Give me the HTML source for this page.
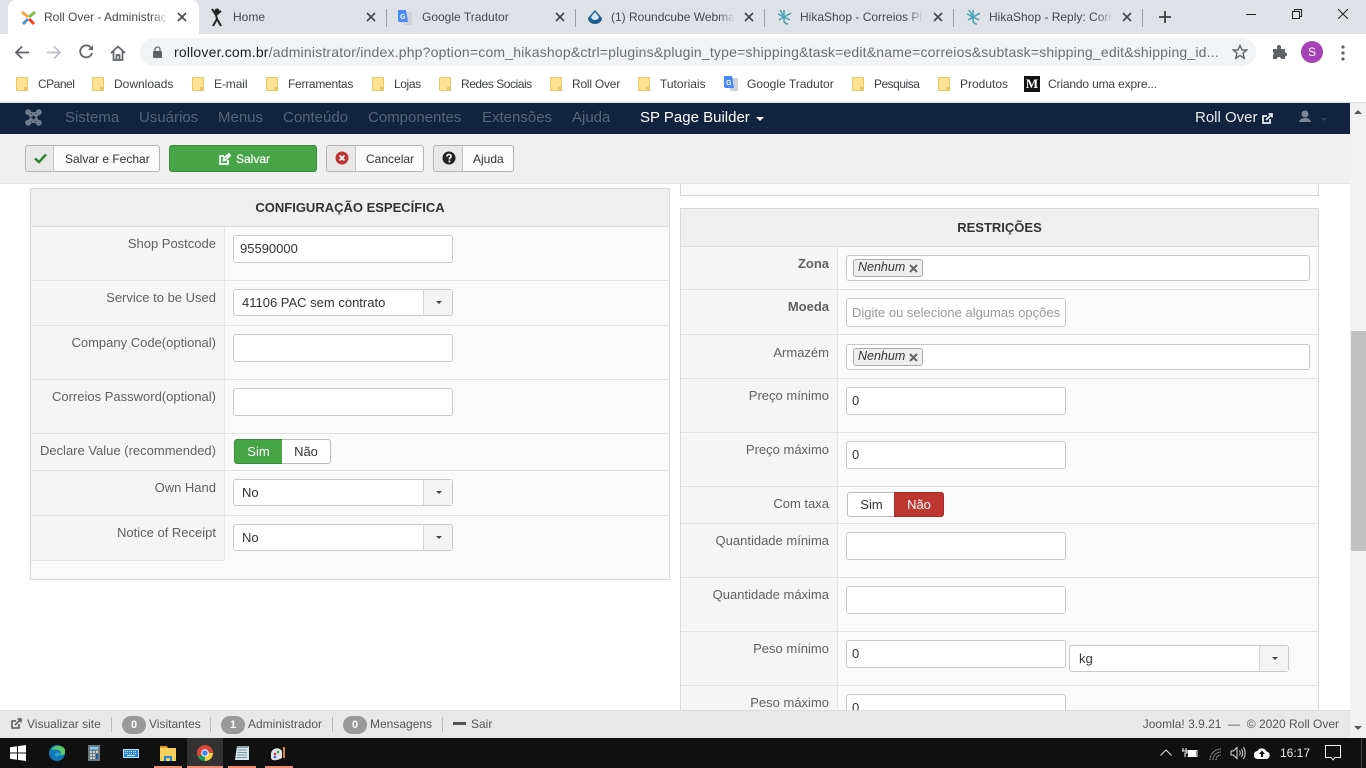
<!DOCTYPE html>
<html lang="pt-BR"><head><meta charset="utf-8"><title>Roll Over - Administração</title>
<style>
*{box-sizing:border-box}
html,body{margin:0;padding:0;width:1366px;height:768px;overflow:hidden;background:#fff;font-family:"Liberation Sans",Arial,sans-serif;color:#515151}
.a{position:absolute}
.t{position:absolute;white-space:nowrap}
svg{position:absolute;display:block}
.tab{font-size:12px;color:#45484c;top:10px;overflow:hidden;width:124px;height:16px;line-height:15px}
.tab:after{content:"";position:absolute;right:0;top:0;width:16px;height:16px;background:linear-gradient(90deg,rgba(222,225,230,0),#dee1e6)}
.tab.on:after{background:linear-gradient(90deg,rgba(255,255,255,0),#fff)}
.sep{position:absolute;top:9px;width:1px;height:18px;background:#9b9fa4}
.bm{position:absolute;top:77px;font-size:12px;line-height:14px;color:#3c4043;white-space:nowrap}
.fd{position:absolute;top:77px;width:12px;height:14px;background:#fde293;border:1px solid #e8c766;border-radius:1px}
.fd:after{content:"";position:absolute;right:-1px;bottom:-1px;width:4px;height:4px;background:#e8c766}
.nv{position:absolute;top:109px;font-size:15px;line-height:18px;color:#576579;white-space:nowrap}
.btn{position:absolute;top:145px;height:27px;border:1px solid #b4b4b4;border-radius:3px;background:#fafafa;font-size:12px;line-height:26px;color:#333;white-space:nowrap}
.btn i{position:absolute;left:0;top:0;height:25px;background:#e8e8e8;border-right:1px solid #c4c4c4;border-radius:2px 0 0 2px}
.btn span{position:absolute;top:0}
.panel{position:absolute;background:#fafafa;border:1px solid #d8d8d8}
.hd{position:absolute;left:0;right:0;top:0;height:38px;background:#efefef;border-bottom:1px solid #dcdcdc;text-align:center;font-size:13px;font-weight:bold;line-height:37px;color:#333}
.col{position:absolute;left:0;top:38px;background:#f5f5f5;border-right:1px solid #e6e6e6}
.ln{position:absolute;left:0;right:0;height:1px;background:#e2e2e2}
.lb{position:absolute;font-size:13px;line-height:16px;color:#606060;text-align:right;white-space:nowrap}
.ip{position:absolute;background:#fff;border:1px solid #c8c8c8;border-radius:3px;font-size:13px;color:#333;line-height:26px;padding-left:6px;white-space:nowrap}
.sel{position:absolute;background:#fff;border:1px solid #c8c8c8;border-radius:3px;font-size:13px;color:#333;line-height:26px;padding-left:8px;white-space:nowrap;width:220px;height:27px}
.sel:after{content:"";position:absolute;right:0;top:0;width:28px;height:25px;background:#f3f3f3;border-left:1px solid #d5d5d5}
.sel:before{content:"";position:absolute;z-index:2;right:10px;top:11px;border:3.5px solid transparent;border-top-color:#444;border-bottom:0}
.chip{position:absolute;left:6px;top:3px;width:70px;height:18px;background:#eee;border:1px solid #aaa;border-radius:3px;font-size:12.5px;font-style:italic;line-height:15px;padding-left:4px;color:#333}
.chip svg{left:55px;top:4px}
.tg{position:absolute;height:25px;font-size:13px;line-height:24px;text-align:center}
.ft{position:absolute;top:717px;font-size:12px;line-height:15px;color:#555;white-space:nowrap}
.bdg{position:absolute;top:716px;width:24px;height:18px;border-radius:9px;background:#999;color:#fff;font-size:11px;font-weight:bold;line-height:18px;text-align:center}
.fs{position:absolute;top:717px;width:1px;height:15px;background:#bbb}
.ul{position:absolute;top:766px;height:2px;background:#f08e74}
</style></head><body>

<!-- tab strip -->
<div class="a" style="left:0;top:0;width:1366px;height:34px;background:#dee1e6"></div>
<div class="a" style="left:8px;top:0;width:191px;height:34px;background:#fff;border-radius:8px 8px 0 0"></div>
<svg style="left:20px;top:9px" width="17" height="17" viewBox="0 0 17 17" fill="none" stroke-width="3"><path d="M2 3L8 8" stroke="#f9a541"/><path d="M15 3L9 8" stroke="#7ac143"/><path d="M3 15L8 10" stroke="#5091cd"/><path d="M14 15L9 10" stroke="#f44321"/></svg>
<div class="tab on t" style="left:44px">Roll Over - Administração</div>
<svg style="left:177px;top:12px" width="10" height="10" viewBox="0 0 10 10" stroke="#43474b" stroke-width="1.6"><path d="M1 1L9 9M9 1L1 9"/></svg>
<svg style="left:210px;top:8px" width="14" height="19" viewBox="0 0 14 19" fill="none" stroke="#222" stroke-width="2"><circle cx="7" cy="3" r="1.5" fill="#222"/><path d="M2 1L6 7L11 3M6 7L7 11L3 18M7 11L11 18"/></svg>
<div class="tab t" style="left:233px">Home</div>
<svg style="left:366px;top:12px" width="10" height="10" viewBox="0 0 10 10" stroke="#43474b" stroke-width="1.6"><path d="M1 1L9 9M9 1L1 9"/></svg>
<div class="sep" style="left:386px"></div>
<svg style="left:397px;top:9px" width="16" height="17" viewBox="0 0 16 17"><path d="M7 3H15V16H7Z" fill="#cfd3d8"/><path d="M1 1H9L11 13H3A2 2 0 0 1 1 11Z" fill="#4a8af4"/><text x="3" y="10" font-size="7" font-weight="bold" fill="#fff" font-family="Liberation Sans">G</text></svg>
<div class="tab t" style="left:422px">Google Tradutor</div>
<svg style="left:555px;top:12px" width="10" height="10" viewBox="0 0 10 10" stroke="#43474b" stroke-width="1.6"><path d="M1 1L9 9M9 1L1 9"/></svg>
<div class="sep" style="left:575px"></div>
<svg style="left:587px;top:9px" width="16" height="16" viewBox="0 0 16 16"><path d="M8 1L15 9A7 6 0 0 1 1 9Z" fill="#1f5f8f"/><path d="M8 3L12 8A4 3 0 0 1 4 8Z" fill="#d5e8f5"/></svg>
<div class="tab t" style="left:611px">(1) Roundcube Webmail</div>
<svg style="left:744px;top:12px" width="10" height="10" viewBox="0 0 10 10" stroke="#43474b" stroke-width="1.6"><path d="M1 1L9 9M9 1L1 9"/></svg>
<div class="sep" style="left:764px"></div>
<svg style="left:777px;top:9px" width="15" height="16" viewBox="0 0 15 16" fill="none" stroke="#3f9fae" stroke-width="1.4"><path d="M7 1V12Q8 15 11 15M1 5L13 11M14 4L2 11M3 1L6 6"/></svg>
<div class="tab t" style="left:800px">HikaShop - Correios Plugin</div>
<svg style="left:933px;top:12px" width="10" height="10" viewBox="0 0 10 10" stroke="#43474b" stroke-width="1.6"><path d="M1 1L9 9M9 1L1 9"/></svg>
<div class="sep" style="left:953px"></div>
<svg style="left:966px;top:9px" width="15" height="16" viewBox="0 0 15 16" fill="none" stroke="#3f9fae" stroke-width="1.4"><path d="M7 1V12Q8 15 11 15M1 5L13 11M14 4L2 11M3 1L6 6"/></svg>
<div class="tab t" style="left:989px">HikaShop - Reply: Correios</div>
<svg style="left:1122px;top:12px" width="10" height="10" viewBox="0 0 10 10" stroke="#43474b" stroke-width="1.6"><path d="M1 1L9 9M9 1L1 9"/></svg>
<div class="sep" style="left:1142px"></div>
<svg style="left:1159px;top:11px" width="12" height="12" viewBox="0 0 12 12" stroke="#3c4043" stroke-width="1.8"><path d="M6 0V12M0 6H12"/></svg>
<svg style="left:1246px;top:14px" width="10" height="2"><rect width="10" height="1" fill="#222"/></svg>
<svg style="left:1292px;top:9px" width="10" height="10" viewBox="0 0 10 10" fill="none" stroke="#222"><path d="M.5 2.5H7.5V9.5H.5ZM2.5 2.5V.5H9.5V7.5H7.5"/></svg>
<svg style="left:1338px;top:9px" width="10" height="10" viewBox="0 0 10 10" stroke="#222"><path d="M0 0L10 10M10 0L0 10"/></svg>

<!-- toolbar -->
<svg style="left:14px;top:45px" width="16" height="15" viewBox="0 0 16 15" fill="none" stroke="#5f6368" stroke-width="1.8"><path d="M15 7.5H2M8 1.5L2 7.5L8 13.5"/></svg>
<svg style="left:46px;top:45px" width="16" height="15" viewBox="0 0 16 15" fill="none" stroke="#bdc1c6" stroke-width="1.8"><path d="M1 7.5H14M8 1.5L14 7.5L8 13.5"/></svg>
<svg style="left:79px;top:44px" width="15" height="15" viewBox="0 0 15 15" fill="none" stroke="#5f6368" stroke-width="1.8"><path d="M13 9A6 6 0 1 1 11.5 3.2"/><path d="M14 1V6H9Z" fill="#5f6368" stroke="none"/></svg>
<svg style="left:110px;top:45px" width="16" height="16" viewBox="0 0 16 16" fill="none" stroke="#5f6368" stroke-width="1.7"><path d="M1 8L8 1.5L15 8M3.5 6.5V15H12.5V6.5M6.5 15V10H9.5V15"/></svg>
<div class="a" style="left:140px;top:38px;width:1116px;height:28px;border-radius:14px;background:#f1f3f4"></div>
<svg style="left:153px;top:46px" width="9" height="12" viewBox="0 0 9 12"><path d="M2 5V3.500A2.500 2.500 0 0 1 7 3.500V5" fill="none" stroke="#5f6368" stroke-width="1.3"/><rect y="5" width="9" height="7" rx="1" fill="#5f6368"/></svg>
<div class="t" style="left:174px;top:44px;font-size:14px;line-height:17px;color:#6a6e73;letter-spacing:.19px"><span style="color:#202124">rollover.com.br</span>/administrator/index.php?option=com_hikashop&amp;ctrl=plugins&amp;plugin_type=shipping&amp;task=edit&amp;name=correios&amp;subtask=shipping_edit&amp;shipping_id...</div>
<svg style="left:1232px;top:44px" width="16" height="16" viewBox="0 0 16 16" fill="none" stroke="#5f6368" stroke-width="1.4"><path d="M8 1.500L10 6H14.800L11 9.200L12.300 14.300L8 11.500L3.700 14.300L5 9.200L1.200 6H6Z"/></svg>
<svg style="left:1272px;top:44px" width="16" height="16" viewBox="0 0 16 16" fill="#5f6368"><path d="M1 5H5V3A2 2 0 0 1 9 3V5H13V8.500A2 2 0 0 1 13 12.500V15H9A2 2 0 0 0 5 15H1V11A2 2 0 0 0 1 8Z"/></svg>
<div class="a" style="left:1301px;top:41px;width:22px;height:22px;border-radius:50%;background:#a742b8;color:#fff;font-size:12px;line-height:22px;text-align:center">S</div>
<svg style="left:1341px;top:45px" width="4" height="16" viewBox="0 0 4 16" fill="#5f6368"><circle cx="2" cy="2" r="1.600"/><circle cx="2" cy="8" r="1.600"/><circle cx="2" cy="14" r="1.600"/></svg>

<!-- bookmarks -->
<i class="fd" style="left:16px"></i><div class="bm" style="left:38px;letter-spacing:-.5px">CPanel</div>
<i class="fd" style="left:92px"></i><div class="bm" style="left:114px">Downloads</div>
<i class="fd" style="left:192px"></i><div class="bm" style="left:214px;letter-spacing:-.1px">E-mail</div>
<i class="fd" style="left:266px"></i><div class="bm" style="left:288px;letter-spacing:-.27px">Ferramentas</div>
<i class="fd" style="left:372px"></i><div class="bm" style="left:394px;letter-spacing:-.4px">Lojas</div>
<i class="fd" style="left:439px"></i><div class="bm" style="left:461px;letter-spacing:-.46px">Redes Sociais</div>
<i class="fd" style="left:550px"></i><div class="bm" style="left:572px;letter-spacing:-.22px">Roll Over</div>
<i class="fd" style="left:638px"></i><div class="bm" style="left:660px">Tutoriais</div>
<svg style="left:723px;top:75px" width="16" height="17" viewBox="0 0 16 17"><path d="M7 3H15V16H7Z" fill="#cfd3d8"/><path d="M1 1H9L11 13H3A2 2 0 0 1 1 11Z" fill="#4a8af4"/><text x="3" y="10" font-size="7" font-weight="bold" fill="#fff" font-family="Liberation Sans">G</text></svg>
<div class="bm" style="left:747px">Google Tradutor</div>
<i class="fd" style="left:852px"></i><div class="bm" style="left:874px;letter-spacing:-.5px">Pesquisa</div>
<i class="fd" style="left:938px"></i><div class="bm" style="left:960px">Produtos</div>
<div class="a" style="left:1024px;top:76px;width:16px;height:16px;background:#111;color:#fff;font:bold 13px/16px 'Liberation Serif',serif;text-align:center">M</div>
<div class="bm" style="left:1048px;letter-spacing:-.16px">Criando uma expre...</div>
<div class="a" style="left:0;top:102px;width:1366px;height:1px;background:#dadce0"></div>

<!-- page -->
<div class="a" style="left:0;top:184px;width:1350px;height:526px;background:#fff"></div>
<div class="a" style="left:0;top:103px;width:1350px;height:31px;background:#12233f"></div>
<svg style="left:25px;top:109px" width="17" height="17" viewBox="0 0 17 17" fill="#6f7c8e"><circle cx="3.200" cy="3.200" r="3"/><circle cx="13.800" cy="3.200" r="3"/><circle cx="3.200" cy="13.800" r="3"/><circle cx="13.800" cy="13.800" r="3"/><path d="M3 5H14L12 8.500L14 12H3L5 8.500Z"/><path d="M5 3H12L8.500 6Z"/><path d="M5 14H12L8.500 11Z"/><path d="M8.500 6.500L11 8.500L8.500 10.500L6 8.500Z" fill="#12233f"/></svg>
<div class="nv" style="left:65px">Sistema</div>
<div class="nv" style="left:139px">Usuários</div>
<div class="nv" style="left:218px">Menus</div>
<div class="nv" style="left:283px">Conteúdo</div>
<div class="nv" style="left:368px">Componentes</div>
<div class="nv" style="left:482px">Extensões</div>
<div class="nv" style="left:572px">Ajuda</div>
<div class="nv" style="left:640px;color:#fff">SP Page Builder</div>
<div class="a" style="left:756px;top:117px;border:4px solid transparent;border-top-color:#fff;border-bottom:0"></div>
<div class="nv" style="left:1195px;color:#e8ebee">Roll Over</div>
<svg style="left:1262px;top:113px" width="11" height="11" viewBox="0 0 11 11" fill="none" stroke="#e8ebee" stroke-width="1.800"><path d="M8 6V10H1V3H5M4 7L10 1M6.500 1H10V4.500"/></svg>
<svg style="left:1299px;top:110px" width="12" height="13" viewBox="0 0 12 13" fill="#7b8796"><circle cx="6" cy="4" r="3.500"/><path d="M0 12Q1 8 6 8T12 12Z"/></svg>
<div class="a" style="left:1321px;top:118px;border:3.500px solid transparent;border-top-color:#33435c;border-bottom:0"></div>

<div class="a" style="left:0;top:134px;width:1350px;height:50px;background:#f0f0f0;border-bottom:1px solid #e4e4e4"></div>
<div class="btn" style="left:25px;width:135px"><i style="width:28px"></i><svg style="left:8px;top:7px" width="13" height="11" viewBox="0 0 13 11" fill="none" stroke="#378137" stroke-width="2.500"><path d="M1 5.500L5 9L12 1.500"/></svg><span style="left:39px">Salvar e Fechar</span></div>
<div class="btn" style="left:169px;width:148px;background:#46a546;border-color:#3d8b3d;color:#fff"><svg style="left:49px;top:7px" width="12" height="12" viewBox="0 0 12 12" fill="none" stroke="#fff" stroke-width="1.800"><path d="M9 7V11H1V3H5M4.500 7.500L4.800 5L10 1L11 2.500L6.500 7.200Z"/></svg><span style="left:66px;text-shadow:0 0 .6px #fff">Salvar</span></div>
<div class="btn" style="left:326px;width:98px"><i style="width:29px"></i><svg style="left:8px;top:5px" width="14" height="14" viewBox="0 0 14 14"><circle cx="7" cy="7" r="6.500" fill="#bd362f"/><path d="M4.500 4.500L9.500 9.500M9.500 4.500L4.500 9.500" stroke="#fff" stroke-width="1.800"/></svg><span style="left:39px">Cancelar</span></div>
<div class="btn" style="left:433px;width:81px"><i style="width:29px"></i><svg style="left:8px;top:5px" width="14" height="14" viewBox="0 0 14 14"><circle cx="7" cy="7" r="6.500" fill="#222"/><path d="M5 5.500Q5 3.500 7 3.500T9 5.500Q9 6.500 7.500 7.200V8.500" stroke="#fff" stroke-width="1.600" fill="none"/><rect x="6.500" y="9.500" width="1.800" height="1.800" fill="#fff"/></svg><span style="left:39px">Ajuda</span></div>

<!-- left panel -->
<div class="panel" style="left:30px;top:188px;width:640px;height:392px">
  <div class="col" style="width:194px;height:333px"></div>
  <div class="hd">CONFIGURAÇÃO ESPECÍFICA</div>
  <div class="ln" style="top:91px"></div><div class="ln" style="top:136px"></div><div class="ln" style="top:190px"></div><div class="ln" style="top:244px"></div><div class="ln" style="top:281px"></div><div class="ln" style="top:326px"></div>
  <div class="ln" style="top:371px;right:445px"></div>
</div>
<div class="lb" style="right:1150px;top:236px">Shop Postcode</div>
<div class="lb" style="right:1150px;top:290px">Service to be Used</div>
<div class="lb" style="right:1150px;top:335px">Company Code(optional)</div>
<div class="lb" style="right:1150px;top:389px">Correios Password(optional)</div>
<div class="lb" style="right:1150px;top:443px">Declare Value (recommended)</div>
<div class="lb" style="right:1150px;top:480px">Own Hand</div>
<div class="lb" style="right:1150px;top:525px">Notice of Receipt</div>
<div class="ip" style="left:233px;top:235px;width:220px;height:28px">95590000</div>
<div class="sel" style="left:233px;top:289px">41106 PAC sem contrato</div>
<div class="ip" style="left:233px;top:334px;width:220px;height:28px"></div>
<div class="ip" style="left:233px;top:388px;width:220px;height:28px"></div>
<div class="tg" style="left:234px;top:439px;width:49px;background:#46a546;border:1px solid #3d8b3d;border-radius:3px 0 0 3px;color:#fff">Sim</div>
<div class="tg" style="left:282px;top:439px;width:49px;background:#fff;border:1px solid #bbb;border-left:0;border-radius:0 3px 3px 0;color:#333">Não</div>
<div class="sel" style="left:233px;top:479px">No</div>
<div class="sel" style="left:233px;top:524px">No</div>

<!-- right panel -->
<div class="panel" style="left:680px;top:184px;width:639px;height:12px;border-top:0"></div>
<div class="panel" style="left:680px;top:208px;width:639px;height:520px">
  <div class="col" style="width:157px;height:482px"></div>
  <div class="hd">RESTRIÇÕES</div>
  <div class="ln" style="top:80px"></div><div class="ln" style="top:125px"></div><div class="ln" style="top:169px"></div><div class="ln" style="top:223px"></div><div class="ln" style="top:277px"></div><div class="ln" style="top:314px"></div><div class="ln" style="top:368px"></div><div class="ln" style="top:422px"></div><div class="ln" style="top:476px"></div>
</div>
<div class="lb" style="right:537px;top:256px;font-weight:bold">Zona</div>
<div class="lb" style="right:537px;top:299px;font-weight:bold">Moeda</div>
<div class="lb" style="right:537px;top:345px">Armazém</div>
<div class="lb" style="right:537px;top:388px">Preço mínimo</div>
<div class="lb" style="right:537px;top:442px">Preço máximo</div>
<div class="lb" style="right:537px;top:496px">Com taxa</div>
<div class="lb" style="right:537px;top:533px">Quantidade mínima</div>
<div class="lb" style="right:537px;top:587px">Quantidade máxima</div>
<div class="lb" style="right:537px;top:641px">Peso mínimo</div>
<div class="lb" style="right:537px;top:695px">Peso máximo</div>
<div class="ip" style="left:846px;top:255px;width:464px;height:26px"><div class="chip">Nenhum<svg width="9" height="9" viewBox="0 0 9 9" stroke="#666" stroke-width="2"><path d="M1 1L8 8M8 1L1 8"/></svg></div></div>
<div class="ip" style="left:846px;top:298px;width:220px;height:29px;padding-left:5px;color:#999;line-height:28px">Digite ou selecione algumas opções</div>
<div class="ip" style="left:846px;top:344px;width:464px;height:26px"><div class="chip">Nenhum<svg width="9" height="9" viewBox="0 0 9 9" stroke="#666" stroke-width="2"><path d="M1 1L8 8M8 1L1 8"/></svg></div></div>
<div class="ip" style="left:846px;top:387px;width:220px;height:28px;padding-left:5px">0</div>
<div class="ip" style="left:846px;top:441px;width:220px;height:28px;padding-left:5px">0</div>
<div class="tg" style="left:847px;top:492px;width:48px;background:#fff;border:1px solid #bbb;border-right:0;border-radius:3px 0 0 3px;color:#333">Sim</div>
<div class="tg" style="left:894px;top:492px;width:50px;background:#bd362f;border:1px solid #a52e28;border-radius:0 3px 3px 0;color:#fff">Não</div>
<div class="ip" style="left:846px;top:532px;width:220px;height:28px"></div>
<div class="ip" style="left:846px;top:586px;width:220px;height:28px"></div>
<div class="ip" style="left:846px;top:640px;width:220px;height:28px;padding-left:5px">0</div>
<div class="sel" style="left:1069px;top:645px;padding-left:9px">kg</div>
<div class="ip" style="left:846px;top:694px;width:220px;height:28px;padding-left:5px">0</div>

<!-- footer -->
<div class="a" style="left:0;top:710px;width:1350px;height:28px;background:#e8e8e8;border-top:1px solid #dcdcdc"></div>
<svg style="left:11px;top:718px" width="11" height="11" viewBox="0 0 11 11" fill="none" stroke="#555" stroke-width="1.500"><path d="M8 6V10H1V3H5M4 7L10 1M6.500 1H10V4.500"/></svg>
<div class="ft" style="left:27px">Visualizar site</div>
<div class="fs" style="left:111px"></div>
<div class="bdg" style="left:122px">0</div><div class="ft" style="left:149px">Visitantes</div>
<div class="fs" style="left:210px"></div>
<div class="bdg" style="left:221px">1</div><div class="ft" style="left:248px">Administrador</div>
<div class="fs" style="left:332px"></div>
<div class="bdg" style="left:343px">0</div><div class="ft" style="left:370px">Mensagens</div>
<div class="fs" style="left:442px"></div>
<div class="a" style="left:453px;top:722px;width:13px;height:3px;background:#555"></div>
<div class="ft" style="left:471px">Sair</div>
<div class="ft" style="right:27px">Joomla! 3.9.21 &nbsp;— &nbsp;© 2020 Roll Over</div>

<!-- scrollbar -->
<div class="a" style="left:1350px;top:103px;width:16px;height:635px;background:#f1f1f1"></div>
<div class="a" style="left:1351px;top:331px;width:15px;height:220px;background:#c1c1c1"></div>
<div class="a" style="left:1354px;top:110px;border:4px solid transparent;border-bottom-color:#555;border-top:0"></div>
<div class="a" style="left:1354px;top:726px;border:4px solid transparent;border-top-color:#555;border-bottom:0"></div>

<!-- taskbar -->
<div class="a" style="left:0;top:738px;width:1366px;height:30px;background:#101010"></div>
<svg style="left:10px;top:745px" width="16" height="16" viewBox="0 0 16 16" fill="#fff"><path d="M0 2.300L7 1.300V7.500H0ZM8 1.100L16 0V7.500H8ZM0 8.500H7V14.700L0 13.700ZM8 8.500H16V16L8 14.900Z"/></svg>
<svg style="left:49px;top:745px" width="16" height="16" viewBox="0 0 16 16"><circle cx="8" cy="8" r="8" fill="#0f78b8"/><path d="M2 5Q5 0 11 1T16 8Q15 11 11 10Q13 6 9 5Q5 4 2 5Z" fill="#5bc96b"/><path d="M6 9Q8 6 11 8Q11 11 8 12Q6 11 6 9Z" fill="#2a9fd8"/></svg>
<svg style="left:88px;top:745px" width="12" height="16" viewBox="0 0 12 16"><rect width="12" height="16" fill="#6d7b85"/><rect x="2" y="2" width="8" height="2.500" fill="#7ed1f0"/><path d="M2 6H4V8H2ZM5 6H7V8H5ZM8 6H10V8H8ZM2 9H4V11H2ZM5 9H7V11H5ZM2 12H4V14H2ZM5 12H7V14H5Z" fill="#d0d5d8"/><rect x="8" y="9" width="2" height="5" fill="#1d5c9e"/></svg>
<svg style="left:123px;top:749px" width="16" height="9" viewBox="0 0 16 9"><rect width="16" height="9" fill="#bfe0f7"/><rect x="1" y="1" width="14" height="7" fill="#2a86d9"/><path d="M2 2.500H14M2 4.500H14" stroke="#cfe8fb" stroke-dasharray="1 1"/><rect x="4" y="6" width="8" height="1" fill="#cfe8fb"/></svg>
<svg style="left:160px;top:745px" width="16" height="16" viewBox="0 0 16 16"><path d="M0 1H7L8 3H0Z" fill="#d99a1e"/><rect y="3" width="16" height="13" fill="#f8cf5c"/><path d="M4 16V11H12V16H10V13H6V16Z" fill="#2a86d9"/></svg>
<div class="a" style="left:187px;top:738px;width:36px;height:30px;background:#333"></div>
<svg style="left:197px;top:745px" width="16" height="16" viewBox="0 0 16 16"><circle cx="8" cy="8" r="8" fill="#db4437"/><path d="M8 8L1 12A8 8 0 0 0 8 16L12 9Z" fill="#0f9d58"/><path d="M8 8H16A8 8 0 0 1 8 16Z" fill="#ffcd40"/><circle cx="8" cy="8" r="3.800" fill="#fff"/><circle cx="8" cy="8" r="2.800" fill="#4285f4"/></svg>
<svg style="left:234px;top:745px" width="16" height="16" viewBox="0 0 16 16"><path d="M3 1H15V15H1Z" fill="#d7e6ec"/><path d="M3 1H15L14 3H3Z" fill="#8da3ad"/><path d="M4 5H13M3.500 7.500H13M3 10H13M2.500 12.500H13" stroke="#7c95a1"/></svg>
<svg style="left:271px;top:745px" width="16" height="16" viewBox="0 0 16 16"><path d="M0 10A6 6 0 0 1 11 6V13Q5 16 2 15T0 10Z" fill="#dfe5ea"/><circle cx="4" cy="9" r="1.300" fill="#d33"/><circle cx="7" cy="7" r="1.300" fill="#3a3"/><circle cx="4" cy="12" r="1.300" fill="#36c"/><path d="M13 2V13" stroke="#e0812c" stroke-width="2"/></svg>
<div class="ul" style="left:154px;width:28px"></div>
<div class="ul" style="left:187px;width:36px"></div>
<div class="ul" style="left:228px;width:28px"></div>
<div class="ul" style="left:265px;width:28px"></div>

<svg style="left:1160px;top:749px" width="12" height="7" viewBox="0 0 12 7" fill="none" stroke="#ddd"><path d="M.5 6.500L6 1L11.500 6.500"/></svg>
<svg style="left:1182px;top:748px" width="16" height="10" viewBox="0 0 16 10" fill="none" stroke="#fff"><path d="M5.500 2.500H15V8.500H5.500"/><rect x="6" y="3" width="8" height="5" fill="#fff" stroke="none"/><path d="M1 0V3M4 0V3M0 3H5V5H3V9"/></svg>
<svg style="left:1209px;top:748px" width="13" height="12" viewBox="0 0 13 12" fill="none" stroke="#bbb" stroke-dasharray="1 .6"><path d="M1 12A11 11 0 0 1 12 1M4 12A8 8 0 0 1 12 4M7 12A5 5 0 0 1 12 7"/></svg>
<svg style="left:1230px;top:746px" width="16" height="14" viewBox="0 0 16 14" fill="none" stroke="#ddd"><path d="M1 5H3.500L7 1.500V12.500L3.500 9H1ZM9.500 4.500Q11 7 9.500 9.500M11.500 3Q14 7 11.500 11M13.500 1Q17 7 13.500 13"/></svg>
<svg style="left:1254px;top:747px" width="16" height="12" viewBox="0 0 16 12"><path d="M4 12A4 4 0 0 1 3.500 4A5 5 0 0 1 12.500 4.500A3.800 3.800 0 0 1 12.500 12Z" fill="#fff"/><path d="M8 3.500L11 7H9V10H7V7H5Z" fill="#101010"/></svg>
<div class="t" style="left:1280px;top:745px;font-size:12px;line-height:16px;color:#e8e8e8">16:17</div>
<svg style="left:1325px;top:745px" width="16" height="16" viewBox="0 0 16 16" fill="none" stroke="#eee"><path d="M.5 .5H15.500V12.500H10L8 15L6 12.500H.5Z"/></svg>
<div class="a" style="left:1361px;top:738px;width:1px;height:30px;background:#444"></div>
</body></html>
